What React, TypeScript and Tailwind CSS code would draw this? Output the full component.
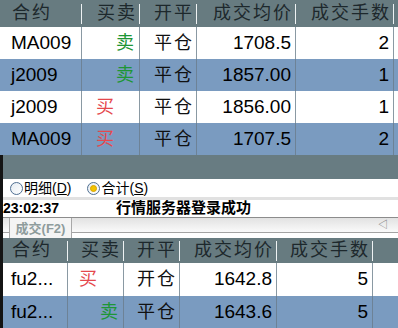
import React from 'react';

type Row = { code: string; side: '买' | '卖'; oc: string; price: string; qty: string };

const topRows: Row[] = [
  { code: 'MA009', side: '卖', oc: '平仓', price: '1708.5', qty: '2' },
  { code: 'j2009', side: '卖', oc: '平仓', price: '1857.00', qty: '1' },
  { code: 'j2009', side: '买', oc: '平仓', price: '1856.00', qty: '1' },
  { code: 'MA009', side: '买', oc: '平仓', price: '1707.5', qty: '2' },
];

const bottomRows: Row[] = [
  { code: 'fu2...', side: '买', oc: '开仓', price: '1642.8', qty: '5' },
  { code: 'fu2...', side: '卖', oc: '平仓', price: '1643.6', qty: '5' },
];

const headers = ['合约', '买卖', '开平', '成交均价', '成交手数'];

const font = { fontFamily: '"Liberation Sans", "Noto Sans CJK SC", sans-serif' };

const HeaderRow: React.FC<{ widths: string[]; h: string; firstPad: string }> = ({ widths, h, firstPad }) => (
  <div className={`flex ${h} bg-[#677b80] text-[#1d282c]`}>
    {headers.map((t, i) => (
      <div key={t} className={`${widths[i]} flex items-center shrink-0`}>
        <span
          className={`flex-1 text-[18px] tracking-[2px] ${i === 0 ? `${firstPad} text-left` : 'text-right pr-[2px]'}`}
        >
          {t}
        </span>
        <span className="w-px h-[20px] bg-[#eef2f3]" />
      </div>
    ))}
    <div className="flex-1" />
  </div>
);

const BodyRow: React.FC<{
  row: Row;
  widths: string[];
  h: string;
  blue: boolean;
  buyPad: string;
  firstPad: string;
}> = ({ row, widths, h, blue, buyPad, firstPad }) => {
  const line = blue ? 'border-[#6d8296]' : 'border-[#8a99a3]';
  return (
    <div className={`flex ${h} ${blue ? 'bg-[#7a9bc0]' : 'bg-white'} text-black`}>
      <div className={`${widths[0]} shrink-0 border-r ${line} flex items-center ${firstPad} text-[19px]`}>{row.code}</div>
      <div
        className={`${widths[1]} shrink-0 border-r ${line} flex items-center text-[18px] ${
          row.side === '买' ? `justify-start ${buyPad} text-[#e5484d]` : 'justify-end pr-[5px] text-[#1e9636]'
        }`}
      >
        {row.side}
      </div>
      <div className={`${widths[2]} shrink-0 border-r ${line} flex items-center justify-end pr-[2px] text-[18px] tracking-[2px] text-[#111]`}>
        {row.oc}
      </div>
      <div className={`${widths[3]} shrink-0 border-r ${line} flex items-center justify-end pr-[4px] text-[19px]`}>{row.price}</div>
      <div className={`${widths[4]} shrink-0 border-r ${line} flex items-center justify-end pr-[4px] text-[19px]`}>{row.qty}</div>
      <div className="flex-1" />
    </div>
  );
};

const Radio: React.FC<{ checked?: boolean }> = ({ checked }) => (
  <span className="w-[13px] h-[13px] rounded-full border border-[#4f6f92] bg-gradient-to-br from-[#e6ecf2] to-white flex items-center justify-center">
    {checked && <span className="w-[7px] h-[7px] rounded-full bg-[#f2c200] border border-[#d9a400]" />}
  </span>
);

export default function App() {
  const topW = ['w-[82px]', 'w-[58px]', 'w-[57px]', 'w-[99px]', 'w-[98px]'];
  const botW = ['w-[65px]', 'w-[56px]', 'w-[56px]', 'w-[97px]', 'w-[96px]'];

  return (
    <div className="w-[398px] h-[328px] overflow-hidden bg-white" style={font}>
      {/* 上方成交汇总 */}
      <HeaderRow widths={topW} h="h-[27px]" firstPad="pl-[12px]" />
      {topRows.map((r, i) => (
        <BodyRow key={i} row={r} widths={topW} h="h-[32px]" blue={i % 2 === 1} buyPad="pl-[14px]" firstPad="pl-[11px]" />
      ))}

      <div className="border-l-[3px] border-[#141414]">
        <div className="h-[24px] bg-[#687c82]" />

        {/* 明细 / 合计 */}
        <div className="h-[18px] flex items-center pl-[7px] text-[14px] text-black">
          <label className="flex items-center gap-[1px]">
            <Radio />
            <span>
              明细(<u>D</u>)
            </span>
          </label>
          <label className="flex items-center gap-[1px] ml-[16px]">
            <Radio checked />
            <span>
              合计(<u>S</u>)
            </span>
          </label>
        </div>
        <div className="h-[3px] bg-[#e1e1e1]" />

        {/* 状态栏 */}
        <div className="h-[18px] flex items-center font-bold text-black border-b border-[#8c8c8c]">
          <span className="text-[14px] w-[113px]">23:02:37</span>
          <span className="text-[15px]">行情服务器登录成功</span>
        </div>

        {/* 标签 */}
        <div className="h-[15px] flex bg-gradient-to-b from-[#e2e2e2] to-[#fafafa] border-b border-[#a3a3a3]">
          <div className="ml-[6px] w-[63px] h-[20px] border-x border-[#a8a8a8] bg-[#f4f4f4] flex items-start justify-center pt-[1px] text-[13px] font-bold text-[#8e9c9c]">
            成交(F2)
          </div>
          <div className="flex-1" />
          <span className="mr-[10px] mt-[2px] text-[10px] leading-none text-[#777]">◁</span>
        </div>
        <div className="h-[5px] bg-white" />

        {/* 下方成交 */}
        <HeaderRow widths={botW} h="h-[25px]" firstPad="pl-[9px]" />
        {bottomRows.map((r, i) => (
          <BodyRow key={i} row={r} widths={botW} h="h-[33px]" blue={i % 2 === 1} buyPad="pl-[11px]" firstPad="pl-[8px]" />
        ))}
      </div>
    </div>
  );
}
